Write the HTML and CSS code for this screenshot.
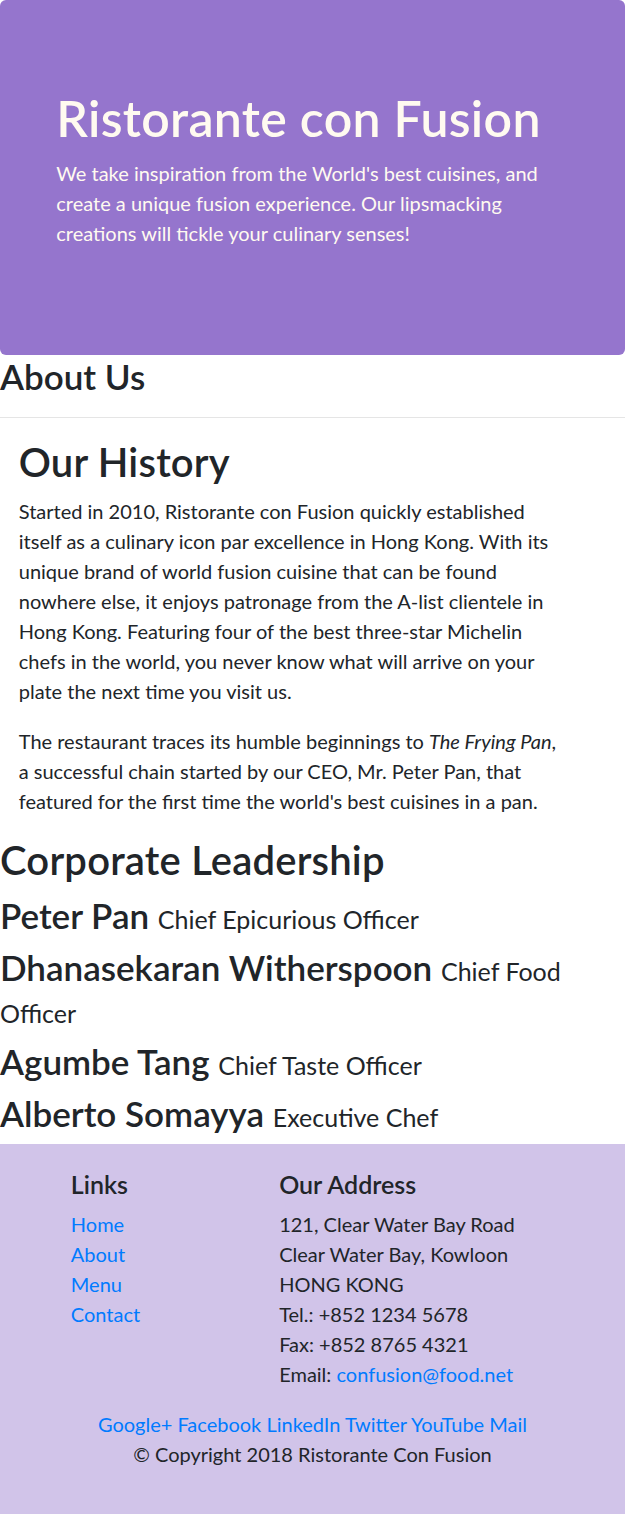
FILE: index.html
```html
<!DOCTYPE html>
<html lang="en">
<head>
<meta charset="utf-8">
<title>Ristorante con Fusion: About Us</title>
<link rel="stylesheet" href="styles.css">
</head>
<body>
<header class="jumbotron">
  <div class="hero-inner">
    <h1 class="hero-title">Ristorante con Fusion</h1>
    <p class="hero-text">We take inspiration from the World's best cuisines, and create a unique fusion experience. Our lipsmacking creations will tickle your culinary senses!</p>
  </div>
</header>

<main>
  <h3 class="page-title">About Us</h3>
  <hr class="divider">

  <section class="history">
    <h2 class="h2">Our History</h2>
    <p class="para">Started in 2010, Ristorante con Fusion quickly established itself as a culinary icon par excellence in Hong Kong. With its unique brand of world fusion cuisine that can be found nowhere else, it enjoys patronage from the A-list clientele in Hong Kong. Featuring four of the best three-star Michelin chefs in the world, you never know what will arrive on your plate the next time you visit us.</p>
    <p class="para">The restaurant traces its humble beginnings to <em>The Frying Pan</em>, a successful chain started by our CEO, Mr. Peter Pan, that featured for the first time the world's best cuisines in a pan.</p>
  </section>

  <section class="leaders">
    <h2 class="h2">Corporate Leadership</h2>
    <h3 class="leader">Peter Pan <span class="role">Chief Epicurious Officer</span></h3>
    <h3 class="leader">Dhanasekaran Witherspoon <span class="role">Chief Food Officer</span></h3>
    <h3 class="leader">Agumbe Tang <span class="role">Chief Taste Officer</span></h3>
    <h3 class="leader">Alberto Somayya <span class="role">Executive Chef</span></h3>
  </section>
</main>

<footer class="footer">
  <div class="footer-row">
    <div class="col-links">
      <h5 class="h5">Links</h5>
      <ul class="link-list">
        <li><a href="#">Home</a></li>
        <li><a href="#">About</a></li>
        <li><a href="#">Menu</a></li>
        <li><a href="#">Contact</a></li>
      </ul>
    </div>
    <div class="col-address">
      <h5 class="h5">Our Address</h5>
      <address class="address">
        121, Clear Water Bay Road<br>
        Clear Water Bay, Kowloon<br>
        HONG KONG<br>
        Tel.: +852 1234 5678<br>
        Fax: +852 8765 4321<br>
        Email: <a href="#">confusion@food.net</a>
      </address>
    </div>
  </div>
  <div class="social">
    <a href="#">Google+</a> <a href="#">Facebook</a> <a href="#">LinkedIn</a> <a href="#">Twitter</a> <a href="#">YouTube</a> <a href="#">Mail</a>
  </div>
  <p class="copyright">© Copyright 2018 Ristorante Con Fusion</p>
</footer>
</body>
</html>
```
FILE: styles.css
```css
* { box-sizing: border-box; }
html, body { margin: 0; padding: 0; }
body {
  font-family: Lato, "Liberation Sans", sans-serif;
  font-size: 20px;
  line-height: 1.5;
  color: #212529;
  background: #fff;
}
a { color: #007bff; text-decoration: none; }

.jumbotron {
  background: #9575cd;
  color: #fffaf0;
  padding: 87.5px 37.5px;
  border-radius: 6px;
}
.hero-inner { padding: 0 18.75px; }
.hero-title {
  margin: 0 0 10px;
  font-size: 50px;
  line-height: 1.2;
  font-weight: 600;
  letter-spacing: 0.3px;
}
.hero-text { margin: 0 0 20px; }

.page-title {
  margin: 0 0 10px;
  font-size: 35px;
  line-height: 1.2;
  font-weight: 600;
}
.divider {
  margin: 20px 0;
  border: 0;
  border-top: 1px solid rgba(0, 0, 0, 0.1);
  height: 0;
}

.history { padding: 0 18.75px; max-width: 582.5px; }
.h2 {
  margin: 0 0 10px;
  font-size: 40px;
  line-height: 1.2;
  font-weight: 600;
  letter-spacing: 0.2px;
}
.para { margin: 0 0 20px; }

.leader {
  margin: 0 0 10px;
  font-size: 35px;
  line-height: 1.2;
  font-weight: 600;
}
.role { font-size: 25px; font-weight: 400; }

.footer {
  background: #d1c4e9;
  padding: 25px 0;
}
.footer-row { display: flex; }
.col-links { margin-left: 52.08px; width: 208.33px; padding: 0 18.75px; }
.col-address { width: 364.58px; padding: 0 18.75px; }
.h5 {
  margin: 0 0 10px;
  font-size: 25px;
  line-height: 1.2;
  font-weight: 600;
}
.link-list { list-style: none; margin: 0 0 20px; padding: 0; }
.address { font-style: normal; margin: 0 0 20px; }
.social { text-align: center; }
.copyright { text-align: center; margin: 0 0 20px; }
```
